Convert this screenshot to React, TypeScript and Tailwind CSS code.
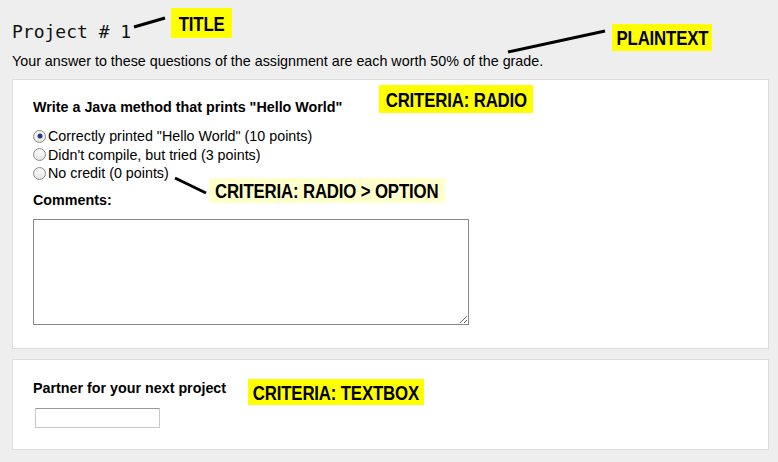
const sans = "font-['Helvetica','Liberation_Sans','Arial',sans-serif]";

const Radio = ({ checked, label }: { checked?: boolean; label: string }) => (
  <label className="flex items-center h-[18.5px]">
    <span className="relative w-[13px] h-[13px] rounded-full border border-[#8d8d8d] bg-gradient-to-b from-white to-[#e4e4e4] shadow-[inset_0_1px_1px_rgba(0,0,0,0.08)] mr-[2px] shrink-0">
      {checked && (
        <span className="absolute left-1/2 top-1/2 w-[5px] h-[5px] -translate-x-1/2 -translate-y-1/2 rounded-full bg-[#1c3f7c]" />
      )}
    </span>
    <span className="text-[14.3px] text-black leading-none">{label}</span>
  </label>
);

// yellow annotation sticker laid over the form
const Tag = ({ text, className }: { text: string; className: string }) => (
  <div className={`absolute flex items-center justify-center whitespace-nowrap ${className}`}>
    <span className="inline-block scale-x-[0.8] font-bold text-[21px] leading-none text-black tracking-[-0.2px]">
      {text}
    </span>
  </div>
);

export default function App() {
  return (
    <div className={`relative w-[778px] h-[462px] overflow-hidden bg-[#eeeeee] ${sans} text-black`}>
      <div className="px-3 pt-[21px]">
        <h1 className="font-['DejaVu_Sans_Mono','Liberation_Mono',monospace] text-[18px] leading-[22px] font-normal text-[#111]">
          Project # 1
        </h1>
        <p className="mt-[10px] text-[14.3px] leading-[17px]">
          Your answer to these questions of the assignment are each worth 50% of the grade.
        </p>

        <div className="mt-[9px] mr-[-3px] bg-white border border-[#dcdcdc] pl-[20px] pt-[19px] pb-[23px]">
          <div className="text-[14.3px] font-bold leading-[17px]">
            Write a Java method that prints "Hello World"
          </div>
          <div className="mt-[11px] flex flex-col">
            <Radio checked label={'Correctly printed "Hello World" (10 points)'} />
            <Radio label="Didn't compile, but tried (3 points)" />
            <Radio label="No credit (0 points)" />
          </div>
          <div className="mt-[9px] text-[14.3px] font-bold leading-[17px]">Comments:</div>
          <textarea className="mt-[10px] block w-[436px] h-[106px] border border-[#888888] bg-white resize-y outline-none" />
        </div>

        <div className="mt-[10px] mr-[-3px] bg-white border border-[#dcdcdc] pl-[20px] pt-[20px] pb-[21px]">
          <div className="text-[14.3px] font-bold leading-[17px]">Partner for your next project</div>
          <input
            type="text"
            className="mt-[11px] ml-[2px] block w-[125px] h-[20px] border border-[#c9c9c9] border-t-[#9a9a9a] bg-white outline-none"
          />
        </div>
      </div>

      <svg className="absolute inset-0 pointer-events-none" width="778" height="462">
        <line x1="134" y1="27" x2="165" y2="18" stroke="#000" strokeWidth="3" />
        <line x1="508" y1="52" x2="605" y2="31" stroke="#000" strokeWidth="3" />
        <line x1="175" y1="178" x2="206" y2="193" stroke="#000" strokeWidth="3" />
      </svg>

      <Tag text="TITLE" className="left-[171px] top-[8px] w-[61px] h-[30px] bg-[#ffff00]" />
      <Tag text="PLAINTEXT" className="left-[612px] top-[24px] w-[100px] h-[27px] bg-[#ffff00]" />
      <Tag text="CRITERIA: RADIO" className="left-[379px] top-[85px] w-[154px] h-[28px] bg-[#ffff00]" />
      <Tag text="CRITERIA: RADIO > OPTION" className="left-[209px] top-[178px] w-[236px] h-[25px] bg-[#ffffcc]" />
      <Tag text="CRITERIA: TEXTBOX" className="left-[248px] top-[379px] w-[176px] h-[26px] bg-[#ffff00]" />
    </div>
  );
}
